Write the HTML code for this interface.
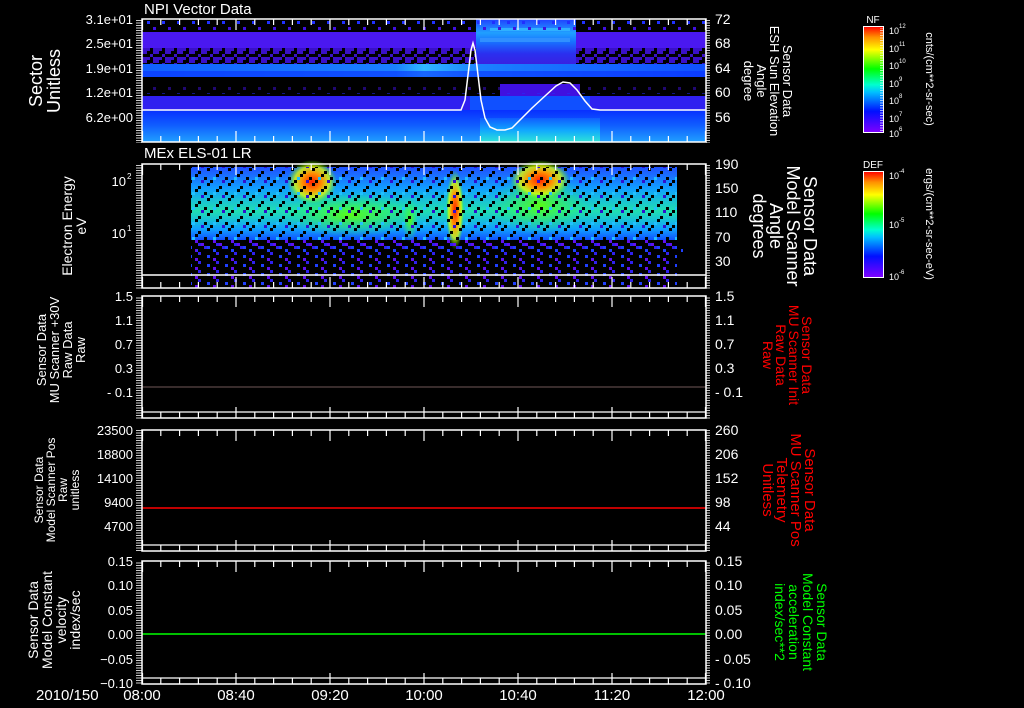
<!DOCTYPE html>
<html><head><meta charset="utf-8"><style>
html,body{margin:0;padding:0;background:#000;width:1024px;height:708px;overflow:hidden}
svg{display:block}
text{font-family:"Liberation Sans",sans-serif;fill:#fff}
</style></head><body>
<svg width="1024" height="708" viewBox="0 0 1024 708" xmlns="http://www.w3.org/2000/svg">
<defs>
<linearGradient id="cb" x1="0" y1="1" x2="0" y2="0">
<stop offset="0" stop-color="#8000ff"/><stop offset="0.2" stop-color="#0010ff"/><stop offset="0.38" stop-color="#00c0ff"/><stop offset="0.45" stop-color="#00ffd0"/><stop offset="0.6" stop-color="#00ff00"/><stop offset="0.78" stop-color="#ffff00"/><stop offset="0.9" stop-color="#ff9000"/><stop offset="1" stop-color="#ff0000"/>
</linearGradient>
<linearGradient id="b1" x1="0" y1="0" x2="1" y2="0">
<stop offset="0" stop-color="#1060ff"/><stop offset="0.45" stop-color="#1a80ff"/><stop offset="0.5" stop-color="#30b8ff"/><stop offset="0.6" stop-color="#1a80ff"/><stop offset="1" stop-color="#1050ff"/>
</linearGradient>
<linearGradient id="b2" x1="0" y1="0" x2="0" y2="1">
<stop offset="0" stop-color="#0830ff"/><stop offset="0.5" stop-color="#1060ff"/><stop offset="1" stop-color="#20a0ff"/>
</linearGradient>
<linearGradient id="b3" x1="0" y1="0" x2="0" y2="1">
<stop offset="0" stop-color="#1060ff"/><stop offset="0.5" stop-color="#10b0ff"/><stop offset="1" stop-color="#30f0d0"/>
</linearGradient>
<linearGradient id="b4" x1="0" y1="0" x2="0" y2="1">
<stop offset="0" stop-color="#2040ff"/><stop offset="0.3" stop-color="#20a0ff"/><stop offset="0.5" stop-color="#1870ff"/><stop offset="0.75" stop-color="#2a30f0"/><stop offset="1" stop-color="#3a20e0"/>
</linearGradient>
<linearGradient id="s1" x1="0" y1="0" x2="0" y2="1">
<stop offset="0" stop-color="#2050ff"/><stop offset="0.3" stop-color="#10a0ff"/><stop offset="0.6" stop-color="#20e0b0"/><stop offset="0.85" stop-color="#10a0ff"/><stop offset="1" stop-color="#1050ff"/>
</linearGradient>
<radialGradient id="hot"><stop offset="0" stop-color="#ff2000"/><stop offset="0.4" stop-color="#ff9000"/><stop offset="0.7" stop-color="#e0ff00" stop-opacity="0.8"/><stop offset="1" stop-color="#40ff00" stop-opacity="0"/></radialGradient>
<radialGradient id="grn"><stop offset="0" stop-color="#60ff00" stop-opacity="0.9"/><stop offset="1" stop-color="#20ff60" stop-opacity="0"/></radialGradient>
<pattern id="spk" width="21" height="15" patternUnits="userSpaceOnUse">
<rect x="0" y="0" width="3" height="3" fill="#000"/><rect x="9" y="6" width="3" height="3" fill="#000"/><rect x="15" y="12" width="3" height="3" fill="#000"/><rect x="6" y="9" width="3" height="3" fill="#000"/><rect x="18" y="3" width="3" height="3" fill="#000"/><rect x="12" y="0" width="3" height="3" fill="#3010d0"/><rect x="3" y="12" width="3" height="3" fill="#20c0ff"/>
</pattern>
<pattern id="spk2" width="12" height="9" patternUnits="userSpaceOnUse">
<rect x="0" y="0" width="6" height="3" fill="#000"/><rect x="6" y="3" width="3" height="6" fill="#000"/><rect x="3" y="6" width="3" height="3" fill="#000"/><rect x="9" y="0" width="3" height="3" fill="#000"/>
</pattern>
<pattern id="spk3" width="15" height="12" patternUnits="userSpaceOnUse">
<rect x="3" y="3" width="3" height="3" fill="#4010e0"/><rect x="12" y="9" width="3" height="3" fill="#2030ff"/>
</pattern>
<pattern id="spk4" width="18" height="9" patternUnits="userSpaceOnUse">
<rect x="0" y="0" width="3" height="3" fill="#3020f0"/><rect x="9" y="3" width="3" height="3" fill="#2040ff"/><rect x="15" y="6" width="3" height="3" fill="#6010f0"/>
</pattern>
<pattern id="yt" width="8" height="2.5" patternUnits="userSpaceOnUse"><line x1="0" y1="0.5" x2="6" y2="0.5" stroke="#fff" stroke-width="0.8"/></pattern>
<path id="xt" stroke="#fff" stroke-width="1.2" fill="none" d="M142.5 0v11M160.8 0v6M179.6 0v6M198.4 0v6M217.2 0v6M236 0v11M254.8 0v6M273.6 0v6M292.4 0v6M311.2 0v6M330 0v11M348.8 0v6M367.6 0v6M386.4 0v6M405.2 0v6M424 0v11M442.8 0v6M461.6 0v6M480.4 0v6M499.2 0v6M518 0v11M536.8 0v6M555.6 0v6M574.4 0v6M593.2 0v6M612 0v11M630.8 0v6M649.6 0v6M668.4 0v6M687.2 0v6M705.5 0v11"/>
</defs>

<!-- panel 1 spectrogram -->
<rect x="142" y="32" width="564" height="16" fill="#4a18f0"/>
<rect x="142" y="48" width="564" height="16" fill="#3a10c8"/>
<rect x="142" y="48" width="564" height="16" fill="url(#spk2)"/>
<rect x="476" y="19" width="100" height="46" fill="url(#b4)"/>
<rect x="490" y="28" width="80" height="3" fill="#30b0ff"/>
<rect x="480" y="38" width="90" height="4" fill="#3090ff"/>
<rect x="142" y="64" width="564" height="13" fill="url(#b1)"/>
<rect x="142" y="71" width="564" height="6" fill="#0830ff" opacity="0.6"/>
<rect x="500" y="84" width="80" height="12" fill="#4010e0"/>
<rect x="142" y="96" width="564" height="14" fill="#3020f0"/>
<rect x="470" y="96" width="120" height="14" fill="#1050ff"/>
<rect x="142" y="110" width="564" height="32" fill="url(#b2)"/>
<rect x="480" y="118" width="120" height="24" fill="url(#b3)" opacity="0.85"/>
<rect x="142" y="19" width="564" height="13" fill="url(#spk3)"/>
<rect x="142" y="84" width="564" height="10" fill="url(#spk3)" opacity="0.5"/>

<!-- panel 2 spectrogram -->
<rect x="191" y="167" width="486" height="73" fill="url(#s1)"/>
<ellipse cx="350" cy="215" rx="70" ry="22" fill="url(#grn)"/>
<ellipse cx="540" cy="205" rx="50" ry="30" fill="url(#grn)"/>
<ellipse cx="455" cy="210" rx="9" ry="40" fill="url(#hot)"/>
<ellipse cx="410" cy="220" rx="8" ry="22" fill="url(#grn)"/>
<ellipse cx="312" cy="182" rx="25" ry="22" fill="url(#hot)"/>
<ellipse cx="540" cy="180" rx="30" ry="20" fill="url(#hot)"/>
<rect x="191" y="167" width="486" height="73" fill="url(#spk)"/>
<rect x="191" y="240" width="486" height="48" fill="url(#spk4)"/>
<rect x="191" y="240" width="486" height="9" fill="url(#spk4)" transform="translate(6,3)"/>

<!-- lines -->
<polyline fill="none" stroke="#fff" stroke-width="1.5" points="142,110 461,110 465,100 468,75 471,50 473,43 475,50 478,75 481,100 485,118 490,127 497,130 505,130 512,128 520,120 532,108 545,96 556,86 563,82 570,83 577,90 585,101 592,109 600,110 706,110"/>
<line x1="142" y1="275" x2="706" y2="275" stroke="#fff" stroke-width="1.5"/>
<line x1="142" y1="387" x2="706" y2="387" stroke="#705858" stroke-width="1"/>
<line x1="142" y1="508" x2="706" y2="508" stroke="#ff0000" stroke-width="1.5"/>
<line x1="142" y1="634" x2="706" y2="634" stroke="#00ff00" stroke-width="1.5"/>

<!-- axes -->
<g fill="none" stroke="#fff" stroke-width="1.5">
<rect x="142" y="19" width="564" height="123"/>
<rect x="142" y="164" width="564" height="124"/>
<rect x="142" y="296" width="564" height="122"/><line x1="142" y1="412" x2="706" y2="412" stroke-width="1.2"/>
<rect x="142" y="430" width="564" height="121"/><line x1="142" y1="545" x2="706" y2="545" stroke-width="1.2"/>
<rect x="142" y="561" width="564" height="123"/><line x1="142" y1="678" x2="706" y2="678" stroke-width="1.2"/>
</g>
<use href="#xt" transform="translate(0,19)"/><use href="#xt" transform="translate(0,142) scale(1,-1)"/>
<use href="#xt" transform="translate(0,164)"/><use href="#xt" transform="translate(0,288) scale(1,-1)"/>
<use href="#xt" transform="translate(0,296)"/><use href="#xt" transform="translate(0,418) scale(1,-1)"/>
<use href="#xt" transform="translate(0,430)"/><use href="#xt" transform="translate(0,551) scale(1,-1)"/>
<use href="#xt" transform="translate(0,561)"/><use href="#xt" transform="translate(0,684) scale(1,-1)"/>
<g>
<rect x="136" y="19" width="6" height="124" fill="url(#yt)"/><rect x="706" y="19" width="6" height="124" fill="url(#yt)"/>
<rect x="136" y="164" width="6" height="125" fill="url(#yt)"/><rect x="706" y="164" width="6" height="125" fill="url(#yt)"/>
<rect x="136" y="296" width="6" height="123" fill="url(#yt)"/><rect x="706" y="296" width="6" height="123" fill="url(#yt)"/>
<rect x="136" y="430" width="6" height="122" fill="url(#yt)"/><rect x="706" y="430" width="6" height="122" fill="url(#yt)"/>
<rect x="136" y="561" width="6" height="124" fill="url(#yt)"/><rect x="706" y="561" width="6" height="124" fill="url(#yt)"/>
</g>

<text x="144" y="14" font-size="15">NPI Vector Data</text>
<text x="144" y="158" font-size="15">MEx ELS-01 LR</text>
<g font-size="13" text-anchor="end">
<text x="133" y="24">3.1e+01</text><text x="133" y="48">2.5e+01</text><text x="133" y="73">1.9e+01</text><text x="133" y="97">1.2e+01</text><text x="133" y="122">6.2e+00</text>
<text x="126" y="186">10</text><text x="126" y="238">10</text>
<text x="133" y="301">1.5</text><text x="133" y="325">1.1</text><text x="133" y="349">0.7</text><text x="133" y="373">0.3</text><text x="133" y="397">- 0.1</text>
<text x="133" y="435">23500</text><text x="133" y="459">18800</text><text x="133" y="483">14100</text><text x="133" y="507">9400</text><text x="133" y="531">4700</text>
<text x="133" y="566">0.15</text><text x="133" y="590">0.10</text><text x="133" y="615">0.05</text><text x="133" y="639">0.00</text><text x="133" y="664">−0.05</text><text x="133" y="688">−0.10</text>
</g>
<g font-size="8"><text x="127" y="179">2</text><text x="127" y="231">1</text></g>
<g font-size="14">
<text x="715" y="24">72</text><text x="715" y="48">68</text><text x="715" y="73">64</text><text x="715" y="97">60</text><text x="715" y="122">56</text>
<text x="715" y="169">190</text><text x="715" y="193">150</text><text x="715" y="217">110</text><text x="715" y="242">70</text><text x="715" y="266">30</text>
<text x="715" y="301">1.5</text><text x="715" y="325">1.1</text><text x="715" y="349">0.7</text><text x="715" y="373">0.3</text><text x="715" y="397">- 0.1</text>
<text x="715" y="435">260</text><text x="715" y="459">206</text><text x="715" y="483">152</text><text x="715" y="507">98</text><text x="715" y="531">44</text>
<text x="715" y="566">0.15</text><text x="715" y="590">0.10</text><text x="715" y="615">0.05</text><text x="715" y="639">0.00</text><text x="715" y="664">- 0.05</text><text x="715" y="688">- 0.10</text>
</g>
<g font-size="15">
<text x="36" y="700">2010/150</text>
<text x="142" y="700" text-anchor="middle">08:00</text><text x="236" y="700" text-anchor="middle">08:40</text><text x="330" y="700" text-anchor="middle">09:20</text><text x="424" y="700" text-anchor="middle">10:00</text><text x="518" y="700" text-anchor="middle">10:40</text><text x="612" y="700" text-anchor="middle">11:20</text><text x="706" y="700" text-anchor="middle">12:00</text>
</g>
<g text-anchor="middle">
<text transform="translate(42,81) rotate(-90)" font-size="18">Sector</text>
<text transform="translate(60,81) rotate(-90)" font-size="18">Unitless</text>
<text transform="translate(72,226) rotate(-90)" font-size="14">Electron Energy</text>
<text transform="translate(86,226) rotate(-90)" font-size="14">eV</text>
<text transform="translate(46,350) rotate(-90)" font-size="13">Sensor Data</text>
<text transform="translate(59,350) rotate(-90)" font-size="13">MU Scanner +30V</text>
<text transform="translate(72,350) rotate(-90)" font-size="13">Raw Data</text>
<text transform="translate(85,350) rotate(-90)" font-size="13">Raw</text>
<text transform="translate(43,490) rotate(-90)" font-size="12">Sensor Data</text>
<text transform="translate(55,490) rotate(-90)" font-size="12">Model Scanner Pos</text>
<text transform="translate(67,490) rotate(-90)" font-size="12">Raw</text>
<text transform="translate(79,490) rotate(-90)" font-size="12">unitless</text>
<text transform="translate(38,620) rotate(-90)" font-size="14">Sensor Data</text>
<text transform="translate(52,620) rotate(-90)" font-size="14">Model Constant</text>
<text transform="translate(66,620) rotate(-90)" font-size="14">velocity</text>
<text transform="translate(80,620) rotate(-90)" font-size="14">index/sec</text>
<text transform="translate(783,81) rotate(90)" font-size="13">Sensor Data</text>
<text transform="translate(770,81) rotate(90)" font-size="13">ESH Sun Elevation</text>
<text transform="translate(757,81) rotate(90)" font-size="13">Angle</text>
<text transform="translate(744,81) rotate(90)" font-size="13">degree</text>
<text transform="translate(804,226) rotate(90)" font-size="18">Sensor Data</text>
<text transform="translate(787,226) rotate(90)" font-size="18">Model Scanner</text>
<text transform="translate(770,226) rotate(90)" font-size="18">Angle</text>
<text transform="translate(753,226) rotate(90)" font-size="18">degrees</text>
<text transform="translate(802,355) rotate(90)" font-size="14" style="fill:#f00">Sensor Data</text>
<text transform="translate(789,355) rotate(90)" font-size="14" style="fill:#f00">MU Scanner Init</text>
<text transform="translate(776,355) rotate(90)" font-size="14" style="fill:#f00">Raw Data</text>
<text transform="translate(763,355) rotate(90)" font-size="14" style="fill:#f00">Raw</text>
<text transform="translate(805,490) rotate(90)" font-size="15" style="fill:#f00">Sensor Data</text>
<text transform="translate(791,490) rotate(90)" font-size="15" style="fill:#f00">MU Scanner Pos</text>
<text transform="translate(777,490) rotate(90)" font-size="15" style="fill:#f00">Telemetry</text>
<text transform="translate(763,490) rotate(90)" font-size="15" style="fill:#f00">Unitless</text>
<text transform="translate(817,622) rotate(90)" font-size="14" style="fill:#0f0">Sensor Data</text>
<text transform="translate(803,622) rotate(90)" font-size="14" style="fill:#0f0">Model Constant</text>
<text transform="translate(789,622) rotate(90)" font-size="14" style="fill:#0f0">acceleration</text>
<text transform="translate(775,622) rotate(90)" font-size="14" style="fill:#0f0">index/sec**2</text>
<text transform="translate(926,79) rotate(90)" font-size="11">cnts/(cm**2-sr-sec)</text>
<text transform="translate(926,224) rotate(90)" font-size="11">ergs/(cm**2-sr-sec-eV)</text>
</g>
<rect x="863.5" y="26.5" width="20" height="106" fill="url(#cb)" stroke="#fff"/>
<rect x="863.5" y="171.5" width="20" height="106" fill="url(#cb)" stroke="#fff"/>
<rect x="878" y="28" width="5" height="103" fill="url(#yt)" opacity="0.8"/>
<text x="873" y="23" font-size="10" text-anchor="middle">NF</text>
<text x="873" y="168" font-size="10" text-anchor="middle">DEF</text>
<g font-size="9">
<text x="889" y="34">10</text><text x="889" y="52">10</text><text x="889" y="69">10</text><text x="889" y="87">10</text><text x="889" y="104">10</text><text x="889" y="122">10</text><text x="889" y="137">10</text>
<text x="889" y="179">10</text><text x="889" y="228">10</text><text x="889" y="280">10</text>
</g>
<g font-size="6">
<text x="899" y="28">12</text><text x="899" y="46">11</text><text x="899" y="63">10</text><text x="899" y="81">9</text><text x="899" y="98">8</text><text x="899" y="116">7</text><text x="899" y="131">6</text>
<text x="899" y="173">-4</text><text x="899" y="222">-5</text><text x="899" y="274">-6</text>
</g>
</svg>
</body></html>
